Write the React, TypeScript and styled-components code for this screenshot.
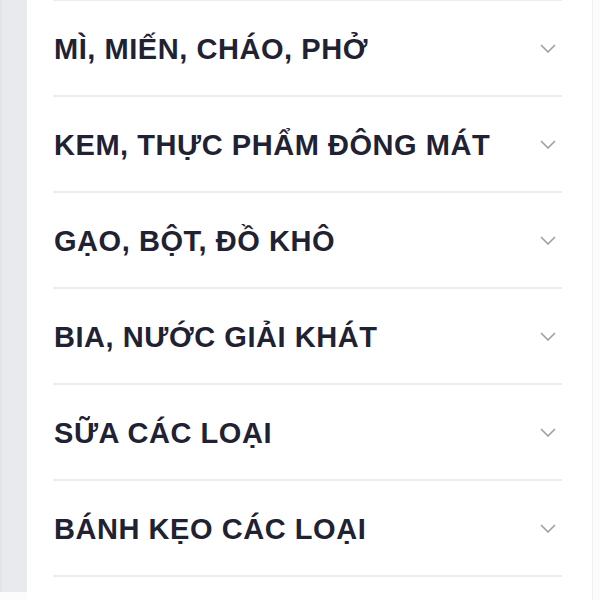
import styled, { createGlobalStyle } from 'styled-components';

const categories = [
	'MÌ, MIẾN, CHÁO, PHỞ',
	'KEM, THỰC PHẨM ĐÔNG MÁT',
	'GẠO, BỘT, ĐỒ KHÔ',
	'BIA, NƯỚC GIẢI KHÁT',
	'SỮA CÁC LOẠI',
	'BÁNH KẸO CÁC LOẠI',
];

function Chevron() {
	return (
		<svg width="16" height="10" viewBox="0 0 16 10" fill="none">
			<path d="M1.5 1.5 L8 8 L14.5 1.5" stroke="#a0a0a5" strokeWidth="1.7" strokeLinecap="round" strokeLinejoin="round" />
		</svg>
	);
}

function App() {
	return (
		<>
			<GlobalStyle />
			<Page>
				<SideStrip />
				<Panel>
					<CategoryList>
						{categories.map((name) => (
							<CategoryItem key={name}>
								<span className="name">{name}</span>
								<Chevron />
							</CategoryItem>
						))}
					</CategoryList>
				</Panel>
			</Page>
		</>
	);
}

const GlobalStyle = createGlobalStyle`
	html, body {
		margin: 0;
		padding: 0;
		background: #fff;
	}
	* {
		box-sizing: border-box;
	}
`;

const Page = styled.div`
	display: flex;
	flex-flow: row nowrap;
	width: 600px;
	height: 600px;
	overflow: hidden;
	background: #fcfcfd;
`;

const SideStrip = styled.div`
	flex: 0 0 27px;
	height: 592px;
	background: #e9eaed;
	border-left: 2px solid #e3e4e8;
`;

const Panel = styled.div`
	flex: 0 0 566px;
	background: #fff;
	border-right: 1px solid #f0f0f3;
	padding: 0 30px 0 26px;
`;

const CategoryList = styled.ul`
	list-style: none;
	margin: 0;
	padding: 0;
	border-top: 2px solid #ececf2;
	margin-top: -1px;
`;

const CategoryItem = styled.li`
	display: flex;
	flex-flow: row nowrap;
	align-items: center;
	justify-content: space-between;
	height: 96px;
	padding: 0 6px 0 1px;
	border-bottom: 2px solid #ececf2;
	.name {
		font-family: 'Liberation Sans', Arial, sans-serif;
		font-size: 29px;
		font-weight: 700;
		color: #1f2233;
		letter-spacing: 0.55px;
		margin-top: 2px;
	}
	svg {
		flex: 0 0 auto;
		margin-top: 2px;
	}
`;

export default App;
